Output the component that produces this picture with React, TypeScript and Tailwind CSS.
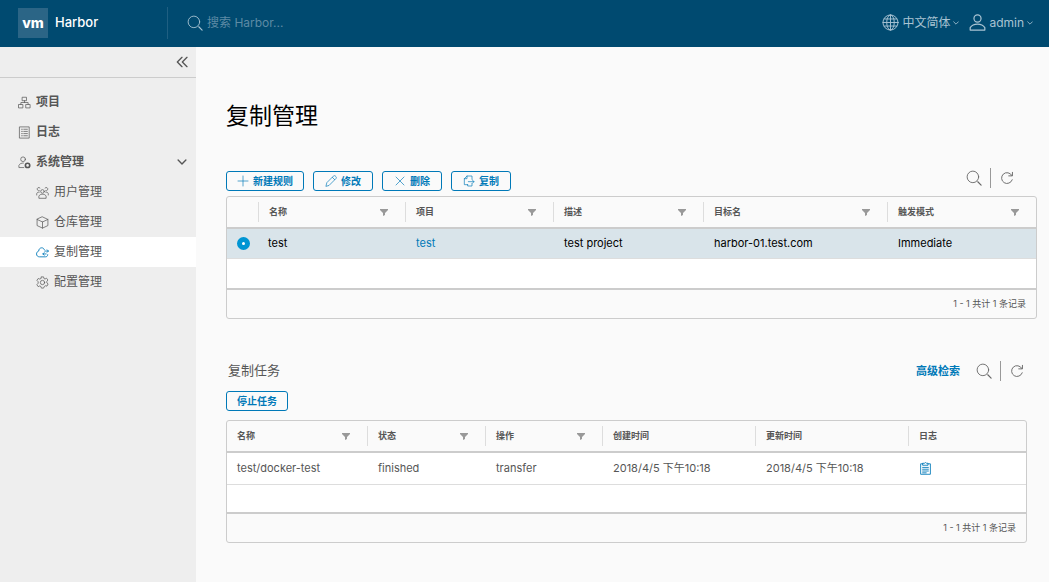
import type { ReactNode } from 'react';

type IconProps = { className?: string; children: ReactNode; width?: number };

function Icon({ className = 'size-4', children, width = 2 }: IconProps) {
  return (
    <svg
      viewBox="0 0 36 36"
      className={`shrink-0 ${className}`}
      fill="none"
      stroke="currentColor"
      strokeWidth={width}
      strokeLinecap="round"
      strokeLinejoin="round"
      aria-hidden="true"
    >
      {children}
    </svg>
  );
}

const SearchIcon = ({ className }: { className?: string }) => (
  <Icon className={className}>
    <circle cx="15.5" cy="15.5" r="13" />
    <path d="M26.5 26.5 34 34" strokeWidth="2.6" />
  </Icon>
);

const RefreshIcon = ({ className }: { className?: string }) => (
  <Icon className={className} width={2.4}>
    <path d="M31.5 22.5A14 14 0 1 1 30.5 11.5" />
    <path d="M32 3.5V12.5H22.5" />
  </Icon>
);

const GlobeIcon = () => (
  <Icon className="size-[17px]">
    <circle cx="18" cy="18" r="16" />
    <ellipse cx="18" cy="18" rx="8" ry="16" />
    <path d="M18 2V34M2 18H34M4.5 10.5H31.5M4.5 25.5H31.5" />
  </Icon>
);

const UserIcon = () => (
  <Icon className="size-[17px]" width={2.6}>
    <circle cx="18" cy="9.5" r="7.5" />
    <path d="M2.5 34V29C6 23.5 11 21.5 18 21.5S30 23.5 33.5 29V34Z" />
  </Icon>
);

const CaretIcon = ({ className }: { className?: string }) => (
  <Icon className={className} width={5}>
    <path d="M4 11 18 25 32 11" />
  </Icon>
);

const CollapseIcon = () => (
  <Icon className="size-3" width={4}>
    <path d="M18 4 4 18 18 32M33 4 19 18 33 32" />
  </Icon>
);

const ProjectIcon = () => (
  <Icon className="size-[13px]">
    <path d="M12.5 3.5H23.5V13H12.5ZM2.5 23.5H13.5V33H2.5ZM22.5 23.5H33.5V33H22.5ZM18 13V18M8 23.5V18H28V23.5" />
  </Icon>
);

const LogsIcon = () => (
  <Icon className="size-[13px]">
    <path d="M5 2.5H31V33.5H5Z" />
    <path d="M10 9H12M10 15H12M10 21H12M10 27H12M16 9H26M16 15H26M16 21H26M16 27H26" />
  </Icon>
);

const AdminIcon = () => (
  <Icon className="size-[13px]">
    <circle cx="14" cy="9" r="6.5" />
    <path d="M16 32H2.5V26C5 21 9 19.5 15 19.5" />
    <circle cx="26.5" cy="26" r="6" strokeWidth="4.5" />
  </Icon>
);

const UsersIcon = () => (
  <Icon className="size-[13px]">
    <circle cx="18" cy="15" r="5" />
    <path d="M8 33V28C10 24 13 23 18 23S26 24 28 28V33Z" />
    <path d="M11 5.5A4.5 4.5 0 1 0 9 13M25 5.5A4.5 4.5 0 1 1 27 13M2 25V21C3 18 5 17 9 17M34 25V21C33 18 31 17 27 17" />
  </Icon>
);

const RegistryIcon = () => (
  <Icon className="size-[13px]">
    <path d="M18 2.5 33 9.5V26.5L18 33.5 3 26.5V9.5ZM3 9.5 18 16.5 33 9.5M18 16.5V33.5" />
  </Icon>
);

const ReplicationIcon = () => (
  <Icon className="size-[13px]" width={2.4}>
    <path d="M23 10C21.500 6.500 19 5 16 5 11 5 7.500 9 7.500 14 4 15 1.500 18 1.500 22 1.500 27 5 30 9.500 30H26C30 30 32.500 28 32.500 24" />
    <path d="M24 14H34M31 10.500 34.500 14 31 17.500M28 22H19M22.500 18.500 19 22 22.500 25.500" />
  </Icon>
);

const ConfigIcon = () => (
  <Icon className="size-[13px]">
    <path d="M15 2.5H21L22 7 25 8.5 29 6 33 11 30 15V19L33.5 22 30.5 28 26 27 23 29 21 33.5H15L13.5 29 10.5 27.5 6 29.5 2.5 24 6 20V16L2.5 12 6 7 10.5 8.5 13.5 7Z" />
    <circle cx="18" cy="18" r="6" />
  </Icon>
);

const FilterIcon = () => (
  <svg viewBox="0 0 8 8" className="size-2" fill="#999" aria-hidden="true">
    <path d="M0 1H8V2L5 5V7L3 8V5L0 2Z" />
  </svg>
);

const PlusIcon = () => (
  <Icon className="size-3">
    <path d="M18 3V33M3 18H33" />
  </Icon>
);

const PencilIcon = () => (
  <Icon className="size-3">
    <path d="M3 33 5.5 23 25 3.5C27 1.5 29.5 1.5 31 3L33 5C34.5 6.5 34.5 9 32.5 11L13 30.5ZM22 7 29 14" />
  </Icon>
);

const TimesIcon = () => (
  <Icon className="size-3">
    <path d="M6 6 30 30M30 6 6 30" />
  </Icon>
);

const CopyIcon = () => (
  <Icon className="size-3">
    <path d="M27 13V3H12L4 11V29H14M12 3V11H4M27 26V33H14V29M16 20H33M28 15 33 20 28 25" />
  </Icon>
);

const ClipboardIcon = () => (
  <Icon className="size-[13px]" width={2.4}>
    <path d="M11 5H4.5V34H31.5V5H25M11 3.5H15L18 1.5 21 3.5H25V9H11Z" />
    <path d="M10 15H26M10 20H26M10 25H26M10 30H20" />
  </Icon>
);

const subItems = [
  { label: '用户管理', icon: <UsersIcon /> },
  { label: '仓库管理', icon: <RegistryIcon /> },
  { label: '复制管理', icon: <ReplicationIcon />, active: true },
  { label: '配置管理', icon: <ConfigIcon /> },
];

function HeadCell({ label, filter = false, first = false }: { label: string; filter?: boolean; first?: boolean }) {
  return (
    <th className="h-8 border-b-2 border-[#ccc] p-0 text-left font-semibold">
      <div className={`flex h-5 items-center justify-between pr-[17px] pl-[10px] ${first ? '' : 'border-l border-[#ddd]'}`}>
        {label}
        {filter && (
          <button type="button" aria-label={`筛选${label}`}>
            <FilterIcon />
          </button>
        )}
      </div>
    </th>
  );
}

function ToolButton({ icon, children }: { icon?: ReactNode; children: ReactNode }) {
  return (
    <button
      type="button"
      className="flex h-5 min-w-[60px] items-center justify-center gap-1 rounded-[3px] border border-[#0079b8] px-[10px] text-[10px] font-semibold text-[#0079b8]"
    >
      {icon}
      {children}
    </button>
  );
}

function SearchRefresh() {
  return (
    <div className="flex items-center text-[#666]">
      <button type="button" aria-label="搜索">
        <SearchIcon className="size-4" />
      </button>
      <span className="mr-[9px] ml-2 h-5 w-px bg-[#999]" />
      <button type="button" aria-label="刷新">
        <RefreshIcon className="size-[14px]" />
      </button>
    </div>
  );
}

function Header() {
  return (
    <header className="flex h-[47px] items-center bg-[#004a70] pr-4 pb-[2px] pl-[18px] text-xs text-[#a9c4d3]">
      <a href="#" className="flex w-[149px] items-center gap-[7px] text-[13px] font-medium text-white">
        <span className="flex size-[30px] items-center justify-center bg-[#2b6586] text-sm leading-none font-extrabold">vm</span>
        Harbor
      </a>
      <label className="flex h-8 flex-1 items-center gap-1 border-l border-[#1f5f82] pl-[19px]">
        <SearchIcon className="size-4" />
        <input
          type="text"
          aria-label="搜索"
          placeholder="搜索 Harbor..."
          className="w-40 bg-transparent outline-none placeholder:text-[#5d8ba5]"
        />
      </label>
      <button type="button" className="flex items-center gap-[3px]">
        <GlobeIcon />
        中文简体
        <CaretIcon className="size-[6px]" />
      </button>
      <button type="button" className="ml-[10px] flex items-center gap-[3px]">
        <UserIcon />
        admin
        <CaretIcon className="size-[6px]" />
      </button>
    </header>
  );
}

function Sidebar() {
  return (
    <nav className="w-[196px] shrink-0 bg-[#eee] text-xs text-[#565656]">
      <div className="flex h-[31px] items-center justify-end border-b border-[#ccc] pr-2">
        <button type="button" aria-label="收起">
          <CollapseIcon />
        </button>
      </div>
      <div className="pt-[9px] font-semibold">
        <a href="#" className="flex h-[30px] items-center gap-[5px] pl-[18px]">
          <ProjectIcon />
          项目
        </a>
        <a href="#" className="flex h-[30px] items-center gap-[5px] pl-[18px]">
          <LogsIcon />
          日志
        </a>
        <button type="button" className="flex h-[30px] w-full items-center gap-[5px] pr-[9px] pl-[18px]">
          <AdminIcon />
          系统管理
          <CaretIcon className="ml-auto size-[10px]" />
        </button>
      </div>
      {subItems.map((item) => (
        <a
          key={item.label}
          href="#"
          className={`flex h-[30px] items-center gap-[5px] pl-9 ${item.active ? 'bg-white' : ''}`}
        >
          <span className={item.active ? 'text-[#0079b8]' : ''}>{item.icon}</span>
          {item.label}
        </a>
      ))}
    </nav>
  );
}

function RulesTable() {
  return (
    <div className="overflow-hidden rounded-[3px] border border-[#ccc]">
      <table className="w-full table-fixed border-separate border-spacing-0 text-[11px]">
        <colgroup>
          <col className="w-[31px]" />
          <col className="w-[147px]" />
          <col className="w-[148px]" />
          <col className="w-[150px]" />
          <col className="w-[184px]" />
          <col className="w-[149px]" />
        </colgroup>
        <thead className="text-[9px] text-[#565656]">
          <tr>
            <td className="border-b-2 border-[#ccc]" />
            <HeadCell label="名称" filter />
            <HeadCell label="项目" filter />
            <HeadCell label="描述" filter />
            <HeadCell label="目标名" filter />
            <HeadCell label="触发模式" filter />
          </tr>
        </thead>
        <tbody className="text-black">
          <tr className="bg-[#d9e4ea] [&>td]:h-[30px] [&>td]:border-b [&>td]:border-[#ddd] [&>td]:py-0 [&>td]:pr-0">
            <td className="pl-[10px]">
              <input
                type="radio"
                name="rule"
                aria-label="test"
                defaultChecked
                className="block size-[13px] appearance-none rounded-full border-[5px] border-[#0095d3] bg-white"
              />
            </td>
            <td className="pl-[10px]">test</td>
            <td className="pl-[11px]">
              <a href="#" className="text-[#0079b8]">test</a>
            </td>
            <td className="pl-[11px]">test project</td>
            <td className="pl-[11px]">harbor-01.test.com</td>
            <td className="pl-[11px]">Immediate</td>
          </tr>
          <tr>
            <td colSpan={6} className="h-[31px] border-b-2 border-[#ccc] bg-white p-0" />
          </tr>
        </tbody>
        <tfoot>
          <tr>
            <td colSpan={6} className="h-7 py-0 pr-[10px] text-right text-[9px] text-[#565656]">1 - 1 共计 1 条记录</td>
          </tr>
        </tfoot>
      </table>
    </div>
  );
}

function JobsTable() {
  return (
    <div className="overflow-hidden rounded-[3px] border border-[#ccc]">
      <table className="w-full table-fixed border-separate border-spacing-0 text-[11px] text-[#565656]">
        <colgroup>
          <col className="w-[140px]" />
          <col className="w-[118px]" />
          <col className="w-[117px]" />
          <col className="w-[153px]" />
          <col className="w-[153px]" />
          <col className="w-[118px]" />
        </colgroup>
        <thead className="text-[9px]">
          <tr>
            <HeadCell label="名称" filter first />
            <HeadCell label="状态" filter />
            <HeadCell label="操作" filter />
            <HeadCell label="创建时间" />
            <HeadCell label="更新时间" />
            <HeadCell label="日志" />
          </tr>
        </thead>
        <tbody className="bg-white">
          <tr className="[&>td]:h-8 [&>td]:border-b [&>td]:border-[#ddd] [&>td]:py-0 [&>td]:pr-0">
            <td className="pl-[10px]">test/docker-test</td>
            <td className="pl-[11px]">finished</td>
            <td className="pl-[11px]">transfer</td>
            <td className="pl-[11px]">2018/4/5 下午10:18</td>
            <td className="pl-[11px]">2018/4/5 下午10:18</td>
            <td className="pl-[11px]">
              <a href="#" aria-label="日志" className="block w-[13px] text-[#0079b8]">
                <ClipboardIcon />
              </a>
            </td>
          </tr>
          <tr>
            <td colSpan={6} className="h-[29px] border-b-2 border-[#ccc] p-0" />
          </tr>
        </tbody>
        <tfoot>
          <tr>
            <td colSpan={6} className="h-7 py-0 pr-[10px] text-right text-[9px]">1 - 1 共计 1 条记录</td>
          </tr>
        </tfoot>
      </table>
    </div>
  );
}

export default function App() {
  return (
    <div className="flex min-h-screen flex-col bg-[#fafafa] font-['Inter','Noto_Sans_CJK_SC',sans-serif]">
      <Header />
      <div className="flex flex-1">
        <Sidebar />
        <main className="min-w-0 flex-1 pt-[53px] pr-3 pb-8 pl-[30px]">
          <h1 className="text-[23px] leading-8 text-black">复制管理</h1>

          <section className="mt-9">
            <div className="flex items-start justify-between pr-[23px]">
              <div className="flex gap-[9px] pt-[3px] pb-[5px]">
                <ToolButton icon={<PlusIcon />}>新建规则</ToolButton>
                <ToolButton icon={<PencilIcon />}>修改</ToolButton>
                <ToolButton icon={<TimesIcon />}>删除</ToolButton>
                <ToolButton icon={<CopyIcon />}>复制</ToolButton>
              </div>
              <SearchRefresh />
            </div>
            <RulesTable />
          </section>

          <section className="mt-10 mr-[10px]">
            <div className="flex h-6 items-center justify-between pr-[3px] pl-[2px]">
              <h2 className="text-[13px] text-[#565656]">复制任务</h2>
              <div className="flex items-center gap-4">
                <button type="button" className="text-[11px] font-semibold text-[#0079b8]">高级检索</button>
                <SearchRefresh />
              </div>
            </div>
            <div className="flex pt-2 pb-[9px]">
              <ToolButton>停止任务</ToolButton>
            </div>
            <JobsTable />
          </section>
        </main>
      </div>
    </div>
  );
}
